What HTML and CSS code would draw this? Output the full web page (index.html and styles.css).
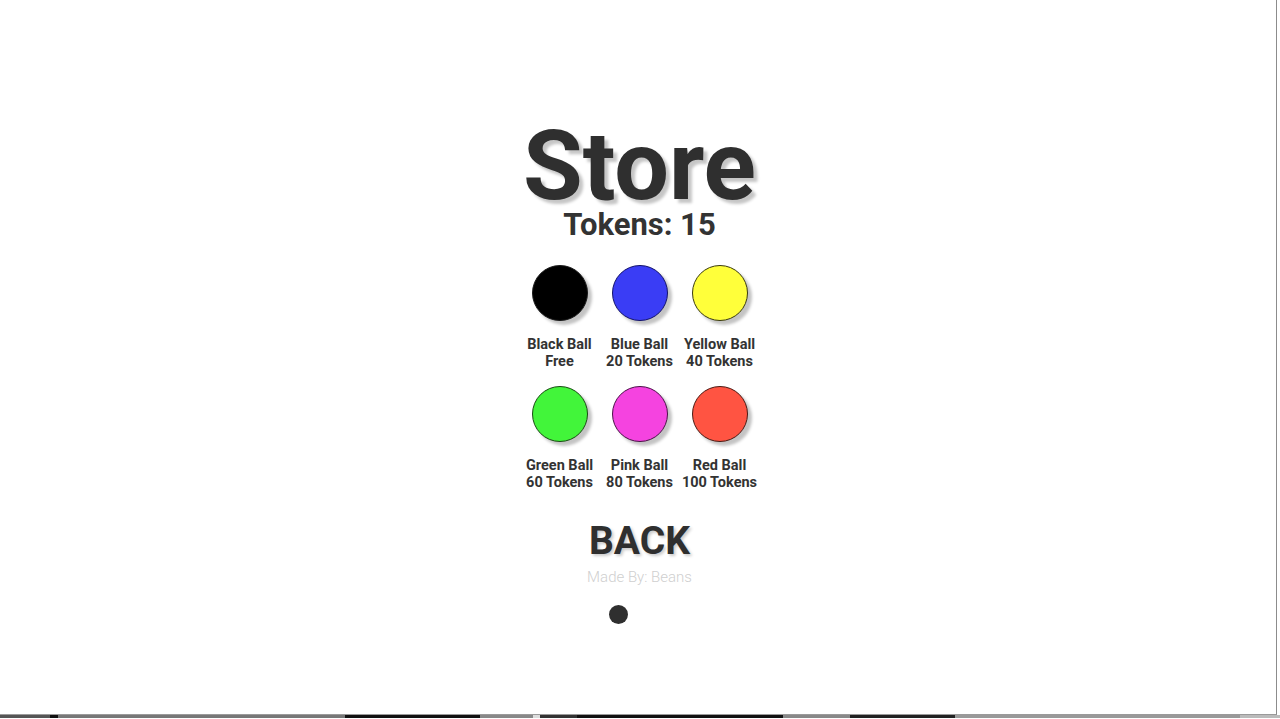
FILE: index.html
```html
<!DOCTYPE html>
<html>
<head>
<meta charset="utf-8">
<link rel="stylesheet" href="styles.css">
</head>
<body>
<div class="screen">
  <main class="store">
    <h1 class="title">Store</h1>
    <div class="tokens">Tokens: 15</div>
    <div class="grid">
      <div class="item"><div class="ball black"></div><div class="label">Black Ball<br>Free</div></div>
      <div class="item"><div class="ball blue"></div><div class="label">Blue Ball<br>20 Tokens</div></div>
      <div class="item"><div class="ball yellow"></div><div class="label">Yellow Ball<br>40 Tokens</div></div>
      <div class="item"><div class="ball green"></div><div class="label">Green Ball<br>60 Tokens</div></div>
      <div class="item"><div class="ball pink"></div><div class="label">Pink Ball<br>80 Tokens</div></div>
      <div class="item"><div class="ball red"></div><div class="label">Red Ball<br>100 Tokens</div></div>
    </div>
    <div class="back">BACK</div>
    <div class="credit">Made By: Beans</div>
    <div class="dot"></div>
  </main>
</div>
<div class="strip"></div>
</body>
</html>
```

FILE: styles.css
```css
html, body {
  margin: 0;
  padding: 0;
  background: #ffffff;
}
body {
  width: 1280px;
  height: 719px;
  overflow: hidden;
  font-family: Roboto, "Liberation Sans", sans-serif;
  color: #333333;
}
.screen {
  width: 1277px;
  height: 715px;
  border-right: 1px solid #8c8c8c;
  border-bottom: 1px solid #9a9a9a;
  box-sizing: border-box;
}
.store {
  display: flex;
  flex-direction: column;
  align-items: center;
  padding-top: 126px;
  margin-left: 3px;
}
.title {
  margin: 0;
  font-size: 97px;
  line-height: 80px;
  font-weight: 700;
  color: #2f2f2f;
  text-shadow: 4px 4px 3px #c6c6c6;
}
.tokens {
  margin-top: 4px;
  font-size: 31px;
  line-height: 30px;
  font-weight: 700;
  color: #333333;
}
.grid {
  margin-top: 25px;
  display: grid;
  grid-template-columns: repeat(3, 80px);
  row-gap: 16px;
}
.item {
  display: flex;
  flex-direction: column;
  align-items: center;
}
.ball {
  width: 56px;
  height: 56px;
  border-radius: 50%;
  box-sizing: border-box;
  border: 1px solid #1a1a1a;
  box-shadow: 4px 4px 3px #c4c4c4;
}
.black { background: #000000; }
.blue { background: #3a3df5; border-color: #13136a; }
.yellow { background: #ffff3a; border-color: #3a3a10; }
.green { background: #42f53a; border-color: #1a4a14; }
.pink { background: #f543e0; border-color: #4a1248; }
.red { background: #ff5442; border-color: #4a1a14; }
.label {
  margin-top: 15px;
  font-size: 14.5px;
  line-height: 17px;
  font-weight: 700;
  text-align: center;
  white-space: nowrap;
  color: #333333;
}
.back {
  margin-top: 30px;
  font-size: 39px;
  line-height: 40px;
  font-weight: 700;
  color: #2f2f2f;
  text-shadow: 2px 2px 3px #cccccc;
}
.credit {
  margin-top: 7px;
  font-size: 15px;
  line-height: 18px;
  font-weight: 300;
  color: #cfcfcf;
}
.dot {
  margin-top: 19px;
  margin-right: 42px;
  width: 19px;
  height: 19px;
  border-radius: 50%;
  background: #2f2f2f;
}
.strip {
  height: 3px;
  width: 1280px;
  background: linear-gradient(to right,
    #555 0px, #555 50px, #111 50px, #111 58px, #777 58px, #777 345px,
    #111 345px, #111 480px, #888 480px, #888 533px, #ddd 533px, #ddd 540px,
    #333 540px, #333 577px, #111 577px, #111 783px, #888 783px, #888 850px,
    #222 850px, #222 955px, #999 955px, #999 1240px, #bbb 1240px, #bbb 1280px);
}
```
